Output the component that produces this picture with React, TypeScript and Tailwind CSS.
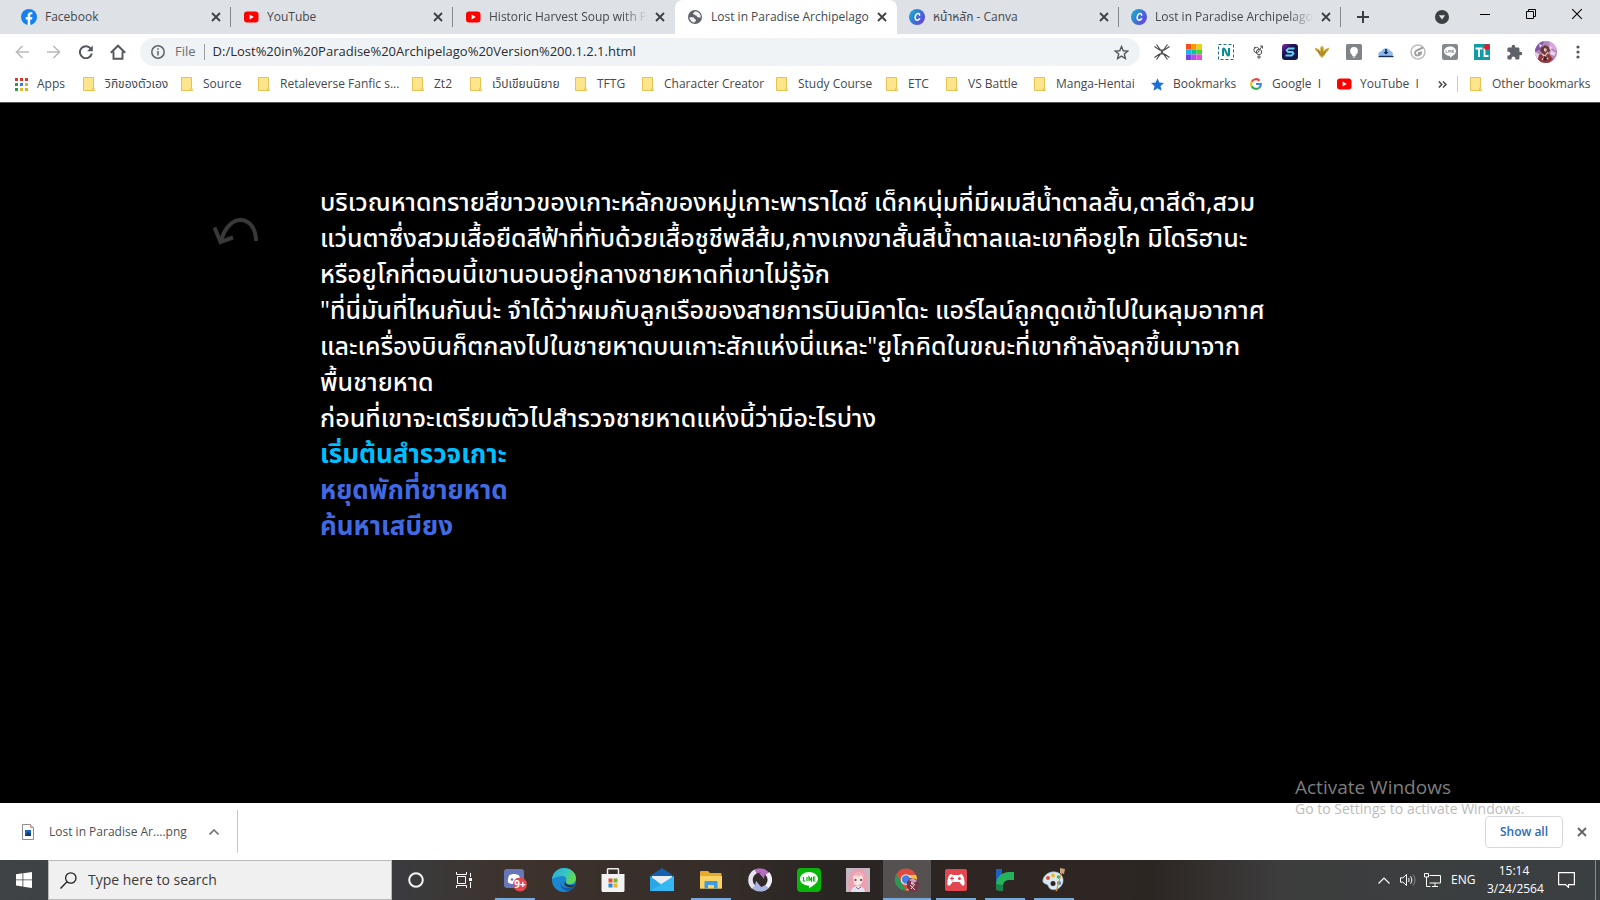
import type { ReactNode } from "react";

const FONT = "font-['Open_Sans','Noto_Sans_Thai','Noto_Sans',sans-serif]";

/* ---------- small glyphs ---------- */

function Cross({ size = 10, color = "#3c4043", width = 1.8 }: { size?: number; color?: string; width?: number }) {
  return (
    <svg width={size} height={size} viewBox="0 0 10 10" stroke={color} strokeWidth={width} fill="none">
      <path d="M1 1l8 8M9 1l-8 8" />
    </svg>
  );
}

function FacebookIcon() {
  return (
    <svg width="16" height="16" viewBox="0 0 16 16">
      <circle cx="8" cy="8" r="8" fill="#1580f0" />
      <path d="M6.7 16v-5.6H4.7V8h2V6.3c0-2 1.2-3.1 3-3.1.9 0 1.7.1 1.7.1v2h-1c-1 0-1.2.6-1.2 1.2V8h2.2l-.4 2.4H9.2V16z" fill="#fff" />
    </svg>
  );
}

function YouTubeIcon() {
  return (
    <svg width="16" height="16" viewBox="0 0 16 16">
      <rect x="1" y="2.5" width="14.5" height="11" rx="3" fill="#f00" />
      <path d="M6.6 5.6v4.8L10.8 8z" fill="#fff" />
    </svg>
  );
}

function GlobeIcon() {
  return (
    <svg width="16" height="16" viewBox="0 0 16 16">
      <circle cx="8" cy="8" r="7" fill="#5f6368" />
      <path d="M2.4 8.2h3.2c1.5 0 2 .8 2 2 1.2 0 1.4.6 1.4 1.2 0 .9-.8 1-1.2 1v1.4A5.8 5.8 0 0 1 2.4 8.2z" fill="#f1f2f3" />
      <path d="M8.6 2.2c-1.6.3-1 1.200-2 1.500s-.6 1.800.4 1.700 1 1.200 2 1.200c1.200 0 .8 1.800 2.200 1.800h2.600A5.800 5.800 0 0 0 8.600 2.200z" fill="#f1f2f3" />
    </svg>
  );
}

function CanvaIcon() {
  return (
    <svg width="16" height="16" viewBox="0 0 16 16">
      <defs>
        <linearGradient id="canva" x1="0" y1="0.2" x2="1" y2="0.9">
          <stop offset="0" stopColor="#16b0cf" />
          <stop offset="0.55" stopColor="#4468d6" />
          <stop offset="1" stopColor="#6b3ce0" />
        </linearGradient>
      </defs>
      <circle cx="8" cy="8" r="8" fill="url(#canva)" />
      <path d="M10.6 6.2c.2-1.500-1-2.100-2.200-1.500-1.900.9-2.700 3.600-2 5.400.6 1.500 2.800 1.400 4.200-.3" fill="none" stroke="#fff" strokeWidth="1.5" strokeLinecap="round" />
    </svg>
  );
}

function Folder() {
  return (
    <svg width="12" height="14" viewBox="0 0 12 14">
      <path d="M.5.5h10v9.500l1 3.500H.5z" fill="#fde58c" stroke="#e6c353" />
      <path d="M9 13.500l1.500-4" stroke="#e6c353" fill="none" />
    </svg>
  );
}

function AppsIcon() {
  const colors = ["#d93a2f", "#d93a2f", "#d93a2f", "#2f9a4d", "#3b78e7", "#e8a92c", "#2f9a4d", "#e8b92c", "#e8a92c"];
  return (
    <svg width="13" height="13" viewBox="0 0 13 13">
      {colors.map((c, i) => (
        <rect key={i} x={(i % 3) * 5} y={Math.floor(i / 3) * 5} width="3" height="3" fill={c} />
      ))}
    </svg>
  );
}

function GoogleIcon() {
  return (
    <svg width="12" height="12" viewBox="0 0 12 12" fill="none" strokeWidth="2.1">
      <path d="M9.600 2.700A4.900 4.900 0 0 0 1.700 3.700" stroke="#ea4335" />
      <path d="M1.700 3.700a4.900 4.900 0 0 0 0 4.600" stroke="#fbbc05" />
      <path d="M1.700 8.300a4.900 4.900 0 0 0 7.500 1.400" stroke="#34a853" />
      <path d="M9.200 9.700A4.700 4.700 0 0 0 10.900 6H6" stroke="#4285f4" />
    </svg>
  );
}

function BlueStar() {
  return (
    <svg width="13" height="13" viewBox="0 0 24 24" fill="#1a6fd8">
      <path d="M12 .5l3.400 8 8.600.7-6.500 5.700 2 8.500L12 18.900l-7.500 4.500 2-8.500L0 9.200l8.600-.7z" />
    </svg>
  );
}

/* ---------- tab strip ---------- */

type TabInfo = { title: string; icon: ReactNode; active?: boolean; sep?: boolean; fade?: boolean };

const TABS: TabInfo[] = [
  { title: "Facebook", icon: <FacebookIcon />, sep: true },
  { title: "YouTube", icon: <YouTubeIcon />, sep: true },
  { title: "Historic Harvest Soup with Pu", icon: <YouTubeIcon />, fade: true },
  { title: "Lost in Paradise Archipelago", icon: <GlobeIcon />, active: true },
  { title: "หน้าหลัก - Canva", icon: <CanvaIcon />, sep: true },
  { title: "Lost in Paradise Archipelago -", icon: <CanvaIcon />, sep: true, fade: true },
];

function Tab({ tab }: { tab: TabInfo }) {
  return (
    <div className={"flex h-full w-[222px] min-w-0 items-center pl-3 " + (tab.active ? "rounded-t-lg bg-white" : "")}>
      <span className="shrink-0">{tab.icon}</span>
      <span
        className={
          "-mr-2 ml-2 min-w-0 flex-1 overflow-hidden whitespace-nowrap text-xs text-[#45494d] " +
          (tab.fade ? "[mask-image:linear-gradient(to_right,black_82%,transparent_97%)]" : "")
        }
      >
        {tab.title}
      </span>
      <button aria-label="Close tab" className="ml-2 flex size-4 shrink-0 items-center justify-center">
        <Cross size={10} />
      </button>
      <span className={"ml-1.5 h-5 w-px shrink-0 " + (tab.sep ? "bg-[#85888c]" : "bg-transparent")} />
    </div>
  );
}

function TabStrip() {
  return (
    <div className="flex h-[34px] items-center bg-[#dee1e6] pl-[9px]">
      {TABS.map((t, i) => (
        <Tab key={i} tab={t} />
      ))}
      <button aria-label="New tab" className="ml-3.5 flex size-4 items-center justify-center">
        <svg width="12" height="12" viewBox="0 0 12 12" stroke="#3c4043" strokeWidth="2">
          <path d="M6 0v12M0 6h12" />
        </svg>
      </button>
      <div className="ml-auto flex items-center">
        <button aria-label="Search tabs" className="mr-2 flex size-6 items-center justify-center">
          <svg width="14" height="14" viewBox="0 0 14 14">
            <circle cx="7" cy="7" r="7" fill="#3c4043" />
            <path d="M3.800 5.200h6.400L7 9.600z" fill="#dee1e6" />
          </svg>
        </button>
        <button aria-label="Minimize" className="mb-1.5 flex h-6 w-[46px] items-center justify-center">
          <svg width="10" height="10" viewBox="0 0 10 10" stroke="#000"><path d="M0 5.500h10" /></svg>
        </button>
        <button aria-label="Restore" className="mb-1.5 flex h-6 w-[46px] items-center justify-center">
          <svg width="10" height="10" viewBox="0 0 10 10" stroke="#000" fill="none">
            <path d="M.5 2.500h7v7h-7zM2.500 2.500v-2h7v7h-2" />
          </svg>
        </button>
        <button aria-label="Close" className="mb-1.5 flex h-6 w-[46px] items-center justify-center">
          <Cross size={12} color="#000" width={0.9} />
        </button>
      </div>
    </div>
  );
}

/* ---------- toolbar ---------- */

const EXTENSIONS: { name: string; icon: ReactNode }[] = [
  {
    name: "Collapse",
    icon: (
      <svg width="16" height="16" viewBox="0 0 16 16" stroke="#4a4a4a" strokeWidth="1.2" fill="none">
        <path d="M.5 2.500l5 3.500h5l5-3.500M.5 13.500l5-3.500h5l5 3.500M2.500 .500l4 5.500L8 8l1.500-2 4-5.500M2.500 15.500l4-5.500L8 8l1.500 2 4 5.500" />
      </svg>
    ),
  },
  {
    name: "Color grid",
    icon: (
      <svg width="16" height="16" viewBox="0 0 16 16">
        <path d="M0 0h5.500v5.500H0z" fill="#f4511e" /><path d="M5.500 0h5v5.500h-5z" fill="#fb9a00" /><path d="M10.500 0H16v5.500h-5.500z" fill="#e8d21c" />
        <path d="M0 5.500h5.500v5H0z" fill="#16b5e8" /><path d="M5.500 5.500h5v5h-5z" fill="#0ec08a" /><path d="M10.500 5.500H16v5h-5.500z" fill="#49d52b" />
        <path d="M0 10.500h5.500V16H0z" fill="#7a3ff0" /><path d="M5.500 10.500h5V16h-5z" fill="#b84af0" /><path d="M10.500 10.500H16V16h-5.500z" fill="#f04ad8" />
      </svg>
    ),
  },
  {
    name: "Novel",
    icon: (
      <svg width="16" height="16" viewBox="0 0 16 16" fill="none">
        <rect x=".5" y=".5" width="15" height="15" stroke="#1c6f83" strokeDasharray="3 2" />
        <path d="M5 12V5.500c0-1.300 1.300-1.200 1.800 0l2.400 5c.5 1.200 1.800 1.200 1.800 0V4" stroke="#0e8c94" strokeWidth="2" />
      </svg>
    ),
  },
  {
    name: "Symbols",
    icon: (
      <svg width="16" height="16" viewBox="0 0 16 16" fill="none" stroke="#555">
        <circle cx="6.500" cy="6" r="2.700" /><circle cx="9" cy="8" r="2.700" />
        <path d="M10 5l2.500-3M10 2h2.500v2.500M9 10.700V15M7 13h4M4 3l2 1" />
      </svg>
    ),
  },
  {
    name: "Stylish",
    icon: (
      <svg width="16" height="16" viewBox="0 0 16 16">
        <defs>
          <linearGradient id="sty" x1="0" y1="0" x2="1" y2="1">
            <stop offset="0" stopColor="#8a2fb0" /><stop offset=".35" stopColor="#1b1450" /><stop offset="1" stopColor="#101d4c" />
          </linearGradient>
        </defs>
        <rect width="16" height="16" rx="3" fill="url(#sty)" />
        <path d="M12.500 4.500H6.500L4.700 6.300 6 8h4.500l1 1.500-1.800 2H3.500" fill="none" stroke="#5fd0f2" strokeWidth="2" />
      </svg>
    ),
  },
  {
    name: "Wings",
    icon: (
      <svg width="16" height="16" viewBox="0 0 16 16">
        <path d="M.5 3.500l4 1.500 2 2L6 4l2-2.500L10 4l-.5 3 2-2 4-1.500-1.500 3.500-2 1.500-1.500 3L8 14l-2.500-2.500-1.500-3L2 7z" fill="#d2ab35" />
        <path d="M3 5.500l4 4M13 5.500l-4 4M8 5v7M4 8l3 3M12 8l-3 3" stroke="#86671a" strokeWidth=".8" />
      </svg>
    ),
  },
  {
    name: "Bulb",
    icon: (
      <svg width="16" height="16" viewBox="0 0 16 16">
        <rect width="16" height="16" rx="1.500" fill="#808489" />
        <circle cx="8" cy="7" r="3.900" fill="#fff" /><path d="M6.200 10h3.600v2H6.200zM6.800 12.600h2.400v.9H6.800z" fill="#fff" />
      </svg>
    ),
  },
  {
    name: "Cloud download",
    icon: (
      <svg width="16" height="16" viewBox="0 0 16 16">
        <path d="M2.500 12.500a2.500 2.500 0 0 1 .8-5A5 5 0 0 1 12.500 7a3 3 0 0 1 1 5.500z" fill="#8db8f0" />
        <path d="M.5 11.800h15v1.400H.5z" fill="#17304f" /><path d="M7.200 5h1.600v3h1.700L8 10.600 5.500 8h1.700z" fill="#10263f" />
      </svg>
    ),
  },
  {
    name: "Grammar",
    icon: (
      <svg width="16" height="16" viewBox="0 0 16 16" fill="none">
        <circle cx="8" cy="8" r="7" stroke="#bdbdbd" strokeWidth="1.5" />
        <path d="M13 3.500L6.500 6.500C4 8.500 5 11.500 7.500 11.500S11 9.500 11 8.500L8 9.300" stroke="#a0a0a0" strokeWidth="2" />
      </svg>
    ),
  },
  {
    name: "LINE",
    icon: (
      <svg width="16" height="16" viewBox="0 0 16 16">
        <rect width="16" height="16" rx="2" fill="#85898d" />
        <path d="M8 2.500c3.500 0 6 2.100 6 4.800 0 2.400-2.500 4.200-6 6.500v-1.900c-3.500-.2-6-2-6-4.600S4.500 2.500 8 2.500z" fill="#fff" />
        <path d="M4 6v2.500h1.500M6.500 6v2.500M7.700 8.500V6l1.500 2.500V6M12 6h-1.500v2.500H12M10.500 7.200H12" stroke="#85898d" strokeWidth=".7" fill="none" />
      </svg>
    ),
  },
  {
    name: "Translate",
    icon: (
      <svg width="16" height="16" viewBox="0 0 16 16">
        <rect width="16" height="16" fill="#129aa5" />
        <path d="M1.500 4.500h7M5 4.500V13M10.500 4v8h4" stroke="#fff" strokeWidth="1.8" fill="none" />
        <circle cx="13" cy="3" r="3" fill="#d9202e" />
      </svg>
    ),
  },
  {
    name: "Extensions",
    icon: (
      <svg width="17" height="17" viewBox="0 0 24 24" fill="#5f6368">
        <path d="M20.500 11H19V7c0-1.100-.9-2-2-2h-4V3.500a2.500 2.500 0 0 0-5 0V5H4c-1.100 0-2 .9-2 2v3.800h1.500a2.700 2.700 0 0 1 0 5.400H2V20c0 1.100.9 2 2 2h3.800v-1.500a2.700 2.700 0 0 1 5.400 0V22H17c1.100 0 2-.9 2-2v-4h1.500a2.500 2.500 0 0 0 0-5z" />
      </svg>
    ),
  },
];

function Avatar() {
  return (
    <svg width="22" height="22" viewBox="0 0 22 22">
      <clipPath id="av"><circle cx="11" cy="11" r="11" /></clipPath>
      <g clipPath="url(#av)">
        <rect width="22" height="22" fill="#b187bd" />
        <path d="M0 0h9l-3 8-6 3z" fill="#8256a2" /><path d="M14 0h8v10l-6-3z" fill="#dca8da" />
        <path d="M6 7l4-3 4 2 1 4-3 3H8l-3-3z" fill="#6a3a3c" /><path d="M9 7l3 1-1 3-2-1z" fill="#e9c4b4" />
        <path d="M4 14l5-2 5 1 4 5-4 4H6l-4-4z" fill="#96383a" /><path d="M7 13l6 5M13 11l-6 8" stroke="#ead9d9" strokeWidth="1.2" />
        <path d="M0 11l4 2-1 5-4-1zM16 9l5 3-2 3-4-2z" fill="#e6d3e8" /><path d="M9 15l3 1-1 4-3-1z" fill="#3a2430" />
        <path d="M14 4l3 3-2 2zM4 3l3 1-2 3z" fill="#f0dff0" />
      </g>
    </svg>
  );
}

function NavButton({ label, children }: { label: string; children: ReactNode }) {
  return (
    <button aria-label={label} className="flex h-7 w-8 shrink-0 items-center justify-center">
      {children}
    </button>
  );
}

function Toolbar() {
  return (
    <div className="flex h-9 items-center bg-white px-1.5">
      <NavButton label="Back">
        <svg width="14" height="14" viewBox="0 0 14 14" stroke="#b8babd" strokeWidth="1.6" fill="none"><path d="M14 7H1.500M7.500 1L1.500 7l6 6" /></svg>
      </NavButton>
      <NavButton label="Forward">
        <svg width="14" height="14" viewBox="0 0 14 14" stroke="#b8babd" strokeWidth="1.6" fill="none"><path d="M0 7h12.500M6.500 1l6 6-6 6" /></svg>
      </NavButton>
      <NavButton label="Reload">
        <svg width="14" height="14" viewBox="0 0 14 14" fill="none" stroke="#54585c" strokeWidth="2"><path d="M12 4A6 6 0 1 0 12.800 8.500" /><path d="M13.800.5v5.700H8.100z" fill="#54585c" stroke="none" /></svg>
      </NavButton>
      <NavButton label="Home">
        <svg width="16" height="16" viewBox="0 0 16 16" fill="none" stroke="#54585c" strokeWidth="1.9"><path d="M3.500 7.500v7.300h9V7.500M.8 8.800L8 1.700l7.200 7.100" /></svg>
      </NavButton>
      <div className="ml-1.5 mr-1.5 flex h-7 min-w-0 flex-1 items-center rounded-full bg-[#f0f3f5] pl-[11px] pr-[11px]">
        <svg width="14" height="14" viewBox="0 0 14 14" fill="none" stroke="#5f6368" strokeWidth="1.5">
          <circle cx="7" cy="7" r="6.200" /><path d="M7 6v4.500M7 3.300v1.500" />
        </svg>
        <label htmlFor="address" className="ml-2.5 text-[13px] text-[#6a6e72]">File</label>
        <span className="ml-2 h-4 w-px bg-[#9a9da1]" />
        <input id="address" className="ml-2 min-w-0 flex-1 bg-transparent text-[13px] text-[#2a2d30] outline-none" defaultValue="D:/Lost%20in%20Paradise%20Archipelago%20Version%200.1.2.1.html" />
        <button aria-label="Bookmark this page">
          <svg width="15" height="15" viewBox="0 0 24 24" fill="none" stroke="#55595d" strokeWidth="2.3"><path d="M12 2.500l2.800 6.700 7.200.6-5.500 4.700 1.700 7.100L12 17.800l-6.200 3.800 1.700-7.100L2 9.800l7.200-.6z" /></svg>
        </button>
      </div>
      {EXTENSIONS.map((e) => (
        <NavButton key={e.name} label={e.name}>{e.icon}</NavButton>
      ))}
      <NavButton label="Profile"><Avatar /></NavButton>
      <NavButton label="Menu">
        <svg width="4" height="14" viewBox="0 0 4 14" fill="#55595d"><circle cx="2" cy="2" r="1.600" /><circle cx="2" cy="7" r="1.600" /><circle cx="2" cy="12" r="1.600" /></svg>
      </NavButton>
    </div>
  );
}

/* ---------- bookmarks ---------- */

const BOOKMARKS: { title: string; icon: ReactNode }[] = [
  { title: "Apps", icon: <AppsIcon /> },
  { title: "วิกิของตัวเอง", icon: <Folder /> },
  { title: "Source", icon: <Folder /> },
  { title: "Retaleverse Fanfic s...", icon: <Folder /> },
  { title: "Zt2", icon: <Folder /> },
  { title: "เว็ปเขียนนิยาย", icon: <Folder /> },
  { title: "TFTG", icon: <Folder /> },
  { title: "Character Creator", icon: <Folder /> },
  { title: "Study Course", icon: <Folder /> },
  { title: "ETC", icon: <Folder /> },
  { title: "VS Battle", icon: <Folder /> },
  { title: "Manga-Hentai", icon: <Folder /> },
  { title: "Bookmarks", icon: <BlueStar /> },
  { title: "Google  I", icon: <GoogleIcon /> },
  { title: "YouTube  I", icon: <YouTubeIcon /> },
];

function Bookmark({ title, icon }: { title: string; icon: ReactNode }) {
  return (
    <a href="#" className="flex items-center gap-2.5 whitespace-pre text-xs text-[#45494d]">
      <span className="flex w-3 shrink-0 justify-center [&>svg]:shrink-0">{icon}</span>
      {title}
    </a>
  );
}

function BookmarksBar() {
  return (
    <nav className="flex h-[33px] items-center border-b border-[#55585b] bg-white pb-1 pl-[15px] pr-2.5">
      <div className="grid grid-cols-[68px_98px_77px_154px_58px_105px_67px_134px_110px_60px_88px_117px_99px_88px_100px]">
        {BOOKMARKS.map((b) => (
          <Bookmark key={b.title} title={b.title} icon={b.icon} />
        ))}
      </div>
      <div className="ml-auto flex items-center">
        <button aria-label="More bookmarks">
          <svg width="9" height="7" viewBox="0 0 9 7" fill="none" stroke="#45494d" strokeWidth="1.5"><path d="M.8.5l3 3-3 3M5 .5l3 3-3 3" /></svg>
        </button>
        <span className="ml-2.5 mr-3 h-4 w-px bg-[#c8cacd]" />
        <Bookmark title="Other bookmarks" icon={<Folder />} />
      </div>
    </nav>
  );
}

/* ---------- story ---------- */

const PASSAGE = [
  "บริเวณหาดทรายสีขาวของเกาะหลักของหมู่เกาะพาราไดซ์ เด็กหนุ่มที่มีผมสีน้ำตาลสั้น,ตาสีดำ,สวม",
  "แว่นตาซึ่งสวมเสื้อยืดสีฟ้าที่ทับด้วยเสื้อชูชีพสีส้ม,กางเกงขาสั้นสีน้ำตาลและเขาคือยูโก มิโดริฮานะ",
  "หรือยูโกที่ตอนนี้เขานอนอยู่กลางชายหาดที่เขาไม่รู้จัก",
  "\"ที่นี่มันที่ไหนกันน่ะ จำได้ว่าผมกับลูกเรือของสายการบินมิคาโดะ แอร์ไลน์ถูกดูดเข้าไปในหลุมอากาศ",
  "และเครื่องบินก็ตกลงไปในชายหาดบนเกาะสักแห่งนี่แหละ\"ยูโกคิดในขณะที่เขากำลังลุกขึ้นมาจาก",
  "พื้นชายหาด",
  "ก่อนที่เขาจะเตรียมตัวไปสำรวจชายหาดแห่งนี้ว่ามีอะไรบ่าง",
];

function Story() {
  return (
    <main className="relative flex flex-1 items-start bg-black pb-10 pl-[213px] pt-20">
      <button aria-label="Undo" className="mt-[34px] w-[107px] shrink-0">
        <svg width="46" height="28" viewBox="0 0 46 28" fill="none" stroke="#383838" strokeWidth="4">
          <path d="M43 24C43 -2 16 -6 8 24M1.500 10.500L7.500 25L20 20.500" />
        </svg>
      </button>
      <article className="whitespace-nowrap text-[25px] font-medium leading-9 text-white">
        {PASSAGE.map((line) => (
          <p key={line}>{line}</p>
        ))}
        <div className="text-[26px] font-bold leading-9">
          <a href="#" className="block text-[#00bfff]">เริ่มต้นสำรวจเกาะ</a>
          <a href="#" className="block text-[#4169e1]">หยุดพักที่ชายหาด</a>
          <a href="#" className="block text-[#4169e1]">ค้นหาเสบียง</a>
        </div>
      </article>
      <div className="pointer-events-none absolute -bottom-4 right-[69px] w-[236px] whitespace-nowrap">
        <p className="text-[19px] leading-6 text-[#7d7d7d]">Activate Windows</p>
        <p className="text-sm leading-5 text-[#bcbcbc]">Go to Settings to activate Windows.</p>
      </div>
    </main>
  );
}

/* ---------- download shelf ---------- */

function DownloadShelf() {
  return (
    <div className="flex h-[57px] items-center bg-white pl-[22px] pr-[13px]">
      <svg width="12" height="16" viewBox="0 0 12 16">
        <path d="M.5.5h8l3 3v12H.5z" fill="#fff" stroke="#8d8f91" /><path d="M8.500.5v3h3" fill="#f2c9c0" stroke="#c98b80" />
        <rect x="3" y="6" width="6" height="6" fill="#1b62b5" /><path d="M3 12l3-4 3 2v2z" fill="#123a70" />
      </svg>
      <span className="ml-[15px] w-[150px] whitespace-nowrap text-xs text-[#4c5054]">Lost in Paradise Ar....png</span>
      <button aria-label="Download options" className="ml-2.5">
        <svg width="10" height="6" viewBox="0 0 10 6" fill="none" stroke="#707478" strokeWidth="1.6"><path d="M.5 5.500L5 1l4.500 4.500" /></svg>
      </button>
      <span className="ml-[18px] h-[43px] w-px bg-[#c6c8ca]" />
      <button className="ml-auto h-8 w-[78px] rounded border border-[#d5d8dc] text-xs font-semibold text-[#2c6cb8]">Show all</button>
      <button aria-label="Close downloads" className="ml-3.5"><Cross size={10} color="#5f6368" /></button>
    </div>
  );
}

/* ---------- taskbar ---------- */

const APPS: { name: string; open?: boolean; active?: boolean; icon: ReactNode }[] = [
  {
    name: "Discord",
    open: true,
    icon: (
      <svg width="24" height="24" viewBox="0 0 24 24">
        <rect x="1" y="1" width="20" height="19" rx="3" fill="#6577b8" />
        <path d="M6 7.500c3-2 7-2 10 0 1.500 3 2 5 1.500 7-4 2-9 2-12.500 0-.5-2 0-4 1-7z" fill="#fff" /><circle cx="9" cy="11.500" r="1.300" fill="#6577b8" /><circle cx="14" cy="11.500" r="1.300" fill="#6577b8" />
        <circle cx="17" cy="16.500" r="7" fill="#e2484d" />
        <text x="17" y="20" fontSize="10" fontWeight="700" textAnchor="middle" fill="#fff">9+</text>
      </svg>
    ),
  },
  {
    name: "Edge",
    icon: (
      <svg width="24" height="24" viewBox="0 0 24 24">
        <defs>
          <linearGradient id="edge" x1="0" y1="0" x2="1" y2=".4"><stop offset="0" stopColor="#27a8e0" /><stop offset=".6" stopColor="#36c6c0" /><stop offset="1" stopColor="#62d84e" /></linearGradient>
        </defs>
        <circle cx="12" cy="12" r="12" fill="#1b86d2" />
        <path d="M0 11C1 4 6 0 12 0c7 0 12 5 12 10 0 4-3 6-6 6-3.500 0-5-1.500-4-3 1-2 0-5-4-5-5 0-9 3-10 3z" fill="url(#edge)" />
        <path d="M8.500 14c0 5 5 8 14 4-1 1.500-2 3-4 4.200C12 24 8 20 8.500 14z" fill="#0f5ba6" />
        <path d="M14 13c-1 2 1 4.500 5 4.300 1.500 0 3-.8 3.700-1.300-1 3.500-5 3.800-8 2.500-3-1.200-2.500-4-.7-5.500z" fill="#33291f" />
      </svg>
    ),
  },
  {
    name: "Microsoft Store",
    icon: (
      <svg width="24" height="24" viewBox="0 0 24 24">
        <path d="M6.500 6V1.500C6.500 1 7 .8 7.500.8h9c.5 0 1 .2 1 .7V6" fill="none" stroke="#ececec" strokeWidth="1.5" />
        <path d="M.5 6h23v16.500c0 .8-.7 1.500-1.500 1.500H2c-.8 0-1.500-.7-1.500-1.500z" fill="#f2f2f2" />
        <path d="M7.500 10.500h4v4h-4z" fill="#e8502a" /><path d="M12.500 10.500h4v4h-4z" fill="#7cb32c" /><path d="M7.500 15.500h4v4h-4z" fill="#2a8ad4" /><path d="M12.500 15.500h4v4h-4z" fill="#f0b428" />
      </svg>
    ),
  },
  {
    name: "Mail",
    icon: (
      <svg width="24" height="24" viewBox="0 0 24 24">
        <path d="M0 8l12-8 12 8v5H0z" fill="#1560ae" /><path d="M2 8h20v10H2z" fill="#e9eef2" />
        <path d="M0 8l12 9 12-9v15H0z" fill="#2aa7e6" /><path d="M0 23l24-15v15z" fill="#35b8f2" />
      </svg>
    ),
  },
  {
    name: "File Explorer",
    open: true,
    icon: (
      <svg width="22" height="24" viewBox="0 0 22 24">
        <path d="M0 4c0-.6.4-1 1-1h7l2 2h10.500c.6 0 1 .4 1 1v14.500H0z" fill="#e9a92c" /><path d="M0 8h22v12.500H0z" fill="#fbd364" />
        <path d="M4.500 20.500V14c0-.6.4-1 1-1h11c.6 0 1 .4 1 1v6.500h-3.500V17H8v3.500z" fill="#3d9be0" />
      </svg>
    ),
  },
  {
    name: "Sync",
    icon: (
      <svg width="24" height="24" viewBox="0 0 24 24" fill="none" strokeWidth="4.5">
        <path d="M5 5.500A9.500 9.500 0 0 1 19.500 6.500" stroke="#b56dc0" /><path d="M19.500 5.500A9.700 9.700 0 0 1 15 21" stroke="#f1f1f5" /><path d="M19 18.500A9.500 9.500 0 0 1 5 18" stroke="#a9b4e0" /><path d="M5.500 19A9.700 9.700 0 0 1 7.500 3.500" stroke="#e6e3ee" />
        <path d="M11 5l6 0-1 6zM13 19H7l1-6z" fill="#b56dc0" stroke="none" />
        <path d="M13 19H7l1-6z" fill="#a9b4e0" stroke="none" />
      </svg>
    ),
  },
  {
    name: "LINE",
    icon: (
      <svg width="24" height="24" viewBox="0 0 24 24">
        <rect width="24" height="24" rx="4" fill="#09b409" />
        <path d="M12 4c5 0 9 3 9 7 0 3.500-4.500 6.500-9 9.500v-2.800c-5-.2-9-3-9-6.700s4-7 9-7z" fill="#fff" />
        <path d="M6.500 9v4h2M10 9v4M12 13V9l2.500 4V9M18.500 9h-2v4h2M16.500 11h2" fill="none" stroke="#09b409" strokeWidth="1.2" />
      </svg>
    ),
  },
  {
    name: "Character",
    icon: (
      <svg width="24" height="24" viewBox="0 0 24 24">
        <rect width="24" height="24" fill="#c5b6c4" /><path d="M3 24C1 10 4 1 12 1s11 8 9 23z" fill="#eba0b0" />
        <path d="M7 9c2-3 8-3 10 0l-1 6-4 3-4-2z" fill="#fbe4dd" /><path d="M5 10c2-5 6-6 8-6s5 2 6 6l-4-3-3 2-2-2z" fill="#f3b0bf" />
        <circle cx="9.500" cy="12" r="1.100" fill="#5b3a58" /><circle cx="15" cy="12" r="1.100" fill="#5b3a58" />
        <path d="M5 24c0-4 4-6 7-6s7 2 7 6z" fill="#dfe4f2" /><path d="M10 19l2 2 3-2" stroke="#b55c7c" fill="none" />
      </svg>
    ),
  },
  {
    name: "Chrome",
    open: true,
    active: true,
    icon: (
      <svg width="24" height="24" viewBox="0 0 24 24">
        <circle cx="11" cy="11.500" r="11" fill="#dd4b3e" />
        <path d="M1.500 6l5 9 4.500 7.500A11 11 0 0 1 1.500 6z" fill="#259b57" /><path d="M11 7h10a11 11 0 0 1-10 15.500l5-9z" fill="#f6c42f" />
        <circle cx="11" cy="11.500" r="5.300" fill="#f3f3f3" /><circle cx="11" cy="11.500" r="4.200" fill="#4380e8" />
        <path d="M12 14l3-4 6 1 3 5-2 7-6 1-4-4z" fill="#7d3145" /><path d="M14 12l4-2 4 3-3 2z" fill="#c9a2cf" /><path d="M15 17l5 5M20 16l-4 5" stroke="#efe2e6" /><path d="M16 14l3 1-1 2-2-1z" fill="#f3d5c9" />
      </svg>
    ),
  },
  {
    name: "Gamepad",
    open: true,
    icon: (
      <svg width="22" height="22" viewBox="0 0 22 22">
        <rect width="22" height="22" rx="2" fill="#e2464e" />
        <path d="M5 5.500c1.500-.8 2.500.5 3.500.5h5c1 0 2-1.300 3.500-.5 2 1 3 8 2.500 10-.5 1.500-2 1.500-3 .2L14.500 13h-7l-2 2.700c-1 1.300-2.500 1.300-3-.2C2 13.500 3 6.500 5 5.500z" fill="#fff" />
        <path d="M7 7.500v4M5 9.500h4" stroke="#e2464e" strokeWidth="1.2" /><circle cx="14.500" cy="9.500" r="1.500" fill="#e2464e" />
      </svg>
    ),
  },
  {
    name: "Branch",
    open: true,
    icon: (
      <svg width="20" height="22" viewBox="0 0 20 22">
        <path d="M1 0h6v22l-6-2z" fill="#1f5fbf" /><path d="M1 21V16C1 8 7 3 14 3h5v8h-5c-4 0-6 3-6 6v5z" fill="#25b35b" /><path d="M1 21v-6l7 1v6z" fill="#16854a" />
      </svg>
    ),
  },
  {
    name: "Paint",
    open: true,
    icon: (
      <svg width="24" height="24" viewBox="0 0 24 24">
        <path d="M10 4c7-1 12 4 11 10-1 5-6 8.500-11 7.500-4-.8-3-4-5-5S0 15 1 11.500C2 7.500 6 4.500 10 4z" fill="#d8e8f2" stroke="#9fbccd" strokeWidth=".6" />
        <circle cx="6" cy="10" r="2" fill="#e5542f" /><circle cx="11" cy="7.500" r="2" fill="#f0b828" /><circle cx="16.500" cy="9" r="1.800" fill="#4eb04e" /><circle cx="17" cy="15" r="2" fill="#3f83d6" /><circle cx="11" cy="15.500" r="2.500" fill="#2e2521" />
        <path d="M21 1l-6 22-1.500.5L19.500 3z" fill="#d69a49" /><path d="M18 0l5 1-1 5-4-1z" fill="#c9a37a" />
      </svg>
    ),
  },
];

function Taskbar() {
  return (
    <footer className="flex h-10 items-stretch bg-[linear-gradient(to_right,#3f4345_0%,#3a3b3e_25%,#3e322c_32%,#352d29_45%,#292523_52%,#2f2622_65%,#2c2623_72%,#3d3d3d_80%,#3a3f42_100%)] text-white">
      <button aria-label="Start" className="flex w-12 items-center justify-center">
        <svg width="16" height="16" viewBox="0 0 16 16" fill="#fff"><path d="M0 2.200L6.500 1.300v6.200H0zM7.300 1.200L16 0v7.500H7.300zM0 8.300h6.500v6.200L0 13.600zM7.300 8.300H16V16l-8.700-1.300z" /></svg>
      </button>
      <div className="flex w-[344px] items-center border border-[#b9b9b9] bg-[#f0f0f0] pl-[11px]">
        <label htmlFor="search" aria-label="Search">
          <svg width="17" height="17" viewBox="0 0 17 17" fill="none" stroke="#222" strokeWidth="1.3"><circle cx="10.800" cy="6" r="5.200" /><path d="M7 9.800L.5 16.500" /></svg>
        </label>
        <input id="search" placeholder="Type here to search" className="ml-[11px] min-w-0 flex-1 bg-transparent text-sm text-[#3a3a3a] outline-none placeholder:text-[#3a3a3a]" />
      </div>
      <button aria-label="Cortana" className="flex w-12 items-center justify-center">
        <svg width="16" height="16" viewBox="0 0 16 16" fill="none" stroke="#f4f4f4" strokeWidth="2"><circle cx="8" cy="8" r="6.800" /></svg>
      </button>
      <button aria-label="Task view" className="mr-[3px] flex w-12 items-center justify-center">
        <svg width="17" height="16" viewBox="0 0 17 16" fill="none" stroke="#fff"><path d="M.5 0v2.500h10V0M.5 16v-2.500h10V16M1.500 4.500h8v7h-8zM14.500 1v4M14.500 10v6" /><path d="M13 6h3v3h-3z" fill="#fff" stroke="none" /></svg>
      </button>
      <div className="flex gap-px">
        {APPS.map((a) => (
          <button key={a.name} aria-label={a.name} className={"flex w-12 flex-col items-center " + (a.active ? "bg-[#545150]" : "")}>
            <span className="flex flex-1 items-center pt-0.5">{a.icon}</span>
            <span className={"h-0.5 " + (a.open ? "bg-[#76a9dc] " : "") + (a.active ? "w-12" : "w-10")} />
          </button>
        ))}
      </div>
      <div className="ml-auto flex items-center">
        <svg width="12" height="7" viewBox="0 0 12 7" fill="none" stroke="#fff" strokeWidth="1.2"><path d="M.5 6.500L6 1l5.500 5.500" /></svg>
        <svg className="ml-2.5" width="16" height="14" viewBox="0 0 16 14" fill="none" stroke="#fff"><path d="M.5 4.800H3L6.500 1.500v11L3 9.200H.5zM8.500 5c.8 1.200.8 2.800 0 4M10.500 3.300c1.800 2.200 1.800 5.200 0 7.400" /><path d="M13 1.500c2.600 3.300 2.600 7.700 0 11" stroke="#8d8f90" /></svg>
        <svg className="ml-2" width="17" height="14" viewBox="0 0 17 14" fill="none" stroke="#fff"><path d="M5.500 2.500h11v7.500h-11M8 13.500h6M11 10v3.500M.5.5h4v3.500h-4zM2.500 4v9.500h4" /></svg>
        <span className="ml-2.5 w-6 text-xs">ENG</span>
        <div className="ml-3 w-[54px] whitespace-nowrap text-center text-xs leading-[18px]">
          <p>15:14</p>
          <p>3/24/2564</p>
        </div>
        <svg className="ml-[17px] mr-5" width="17" height="16" viewBox="0 0 17 16" fill="none" stroke="#fff" strokeWidth="1.2"><path d="M.6.6h15.800v12H10.500v2.800L7.500 12.600H.6z" /></svg>
      </div>
      <span className="mr-1 w-px bg-[#8a8c8e]" />
    </footer>
  );
}

export default function App() {
  return (
    <div className={"flex min-h-screen flex-col overflow-hidden " + FONT}>
      <TabStrip />
      <Toolbar />
      <BookmarksBar />
      <Story />
      <DownloadShelf />
      <Taskbar />
    </div>
  );
}
